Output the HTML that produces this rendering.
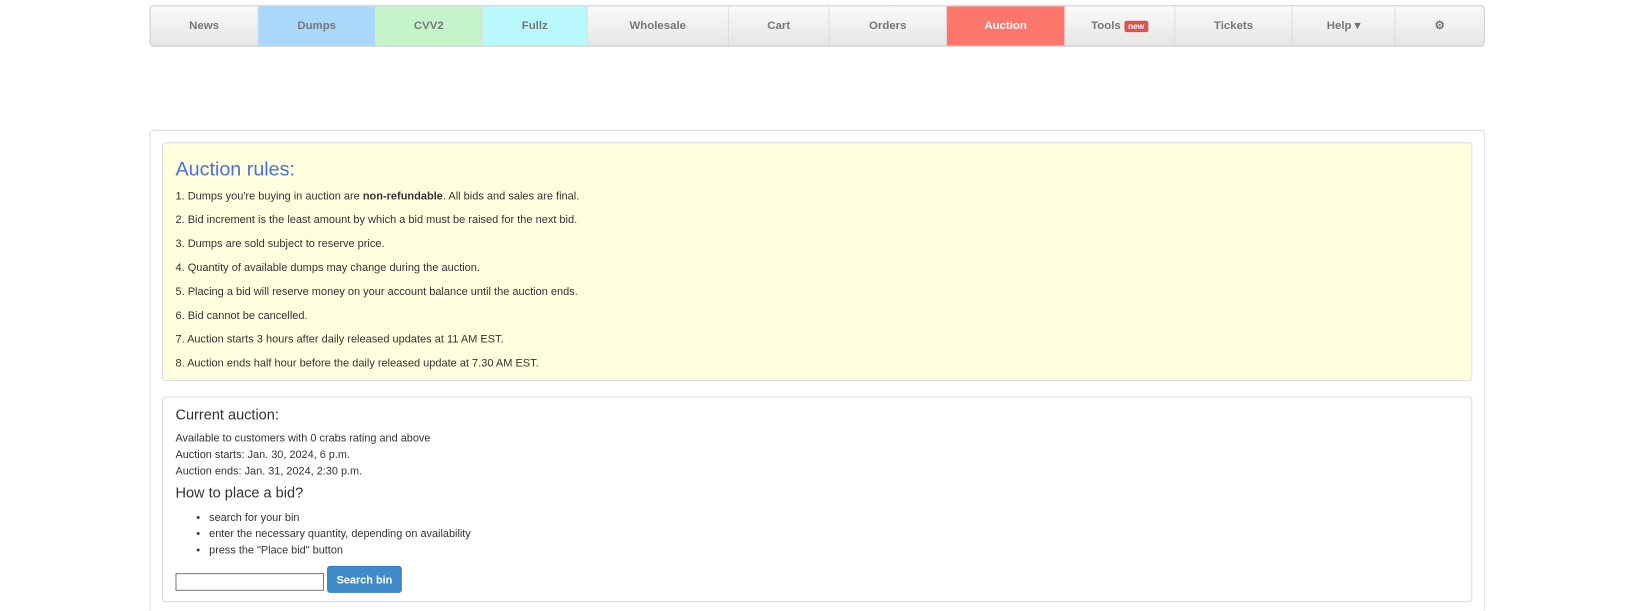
<!DOCTYPE html>
<html style="width:1628px;height:611px;overflow:hidden"><head><style>
body{margin:0;background:#fff;font-family:"Liberation Sans",Arial,sans-serif;color:#333;width:1628px;height:611px;overflow:hidden;position:relative}
#w{position:absolute;left:0;top:0;width:1568px;height:588px;overflow:hidden;transform:scale(1.0383);transform-origin:0 0}
.nav{position:absolute;left:144px;top:5px;width:1284px;height:38px;border:1px solid #ccc;border-radius:4px;display:flex;overflow:hidden;background:linear-gradient(#fafafa,#e6e6e6)}
.nav div{height:38px;line-height:38px;text-align:center;font-size:11px;font-weight:bold;color:#777;border-right:1px solid #ddd;box-sizing:border-box}
.badge{display:inline-block;background:#d9534f;color:#fff;font-size:8px;line-height:11px;padding:0 4px;border-radius:2px;vertical-align:middle}
.outer{position:absolute;left:144px;top:125px;width:1284px;height:500px;border:1px solid #ddd;border-radius:3px}
.rules{position:absolute;left:156px;top:137px;width:1260px;height:228px;background:#ffffe0;border:1px solid #ddd;border-radius:3px}
.rules h2{position:absolute;left:12px;top:15px;margin:0;font-size:19px;font-weight:normal;color:#4a6fd6}
.rules p{position:absolute;left:12px;margin:0;font-size:10.6px;color:#333}
.cur{position:absolute;left:156px;top:382px;width:1260px;height:196px;border:1px solid #ddd;border-radius:3px;font-size:10.5px;color:#333}
.cur .a{position:absolute;left:12px}
</style></head><body><div id="w">
<div class="nav">
<div style="width:104px">News</div>
<div style="width:113px;background:#a9d8fa">Dumps</div>
<div style="width:103px;background:#c6f4ca">CVV2</div>
<div style="width:101px;background:#b9f9fb">Fullz</div>
<div style="width:136px">Wholesale</div>
<div style="width:97px">Cart</div>
<div style="width:113px">Orders</div>
<div style="width:114px;background:#fd766b;color:#fff">Auction</div>
<div style="width:106px">Tools <span class="badge">new</span></div>
<div style="width:113px">Tickets</div>
<div style="width:99px">Help ▾</div>
<div style="width:85px;border-right:0">⚙</div>
</div>
<div class="outer"></div>
<div class="rules">
<h2>Auction rules:</h2>
<p style="top:45px">1. Dumps you're buying in auction are <b>non-refundable</b>. All bids and sales are final.</p>
<p style="top:68px">2. Bid increment is the least amount by which a bid must be raised for the next bid.</p>
<p style="top:91px">3. Dumps are sold subject to reserve price.</p>
<p style="top:114px">4. Quantity of available dumps may change during the auction.</p>
<p style="top:137px">5. Placing a bid will reserve money on your account balance until the auction ends.</p>
<p style="top:160px">6. Bid cannot be cancelled.</p>
<p style="top:183px">7. Auction starts 3 hours after daily released updates at 11 AM EST.</p>
<p style="top:206px">8. Auction ends half hour before the daily released update at 7.30 AM EST.</p>
</div>
<div class="cur">
<div class="a" style="top:8px;font-size:14px">Current auction:</div>
<div class="a" style="top:33px">Available to customers with 0 crabs rating and above</div>
<div class="a" style="top:49px">Auction starts: Jan. 30, 2024, 6 p.m.</div>
<div class="a" style="top:65px">Auction ends: Jan. 31, 2024, 2:30 p.m.</div>
<div class="a" style="top:83px;font-size:14px">How to place a bid?</div>
<div class="a" style="left:32px;top:110px">•&nbsp;&nbsp; search for your bin</div>
<div class="a" style="left:32px;top:125px">•&nbsp;&nbsp; enter the necessary quantity, depending on availability</div>
<div class="a" style="left:32px;top:141px">•&nbsp;&nbsp; press the "Place bid" button</div>
<div class="a" style="top:169px;width:143px;height:17px;border:1px solid #777;box-sizing:border-box"></div>
<div class="a" style="left:158px;top:162px;width:72px;height:26px;background:#428bca;border:1px solid #357ebd;border-radius:3px;color:#fff;font-weight:bold;text-align:center;line-height:26px;box-sizing:border-box">Search bin</div>
</div>
</div></body></html>
